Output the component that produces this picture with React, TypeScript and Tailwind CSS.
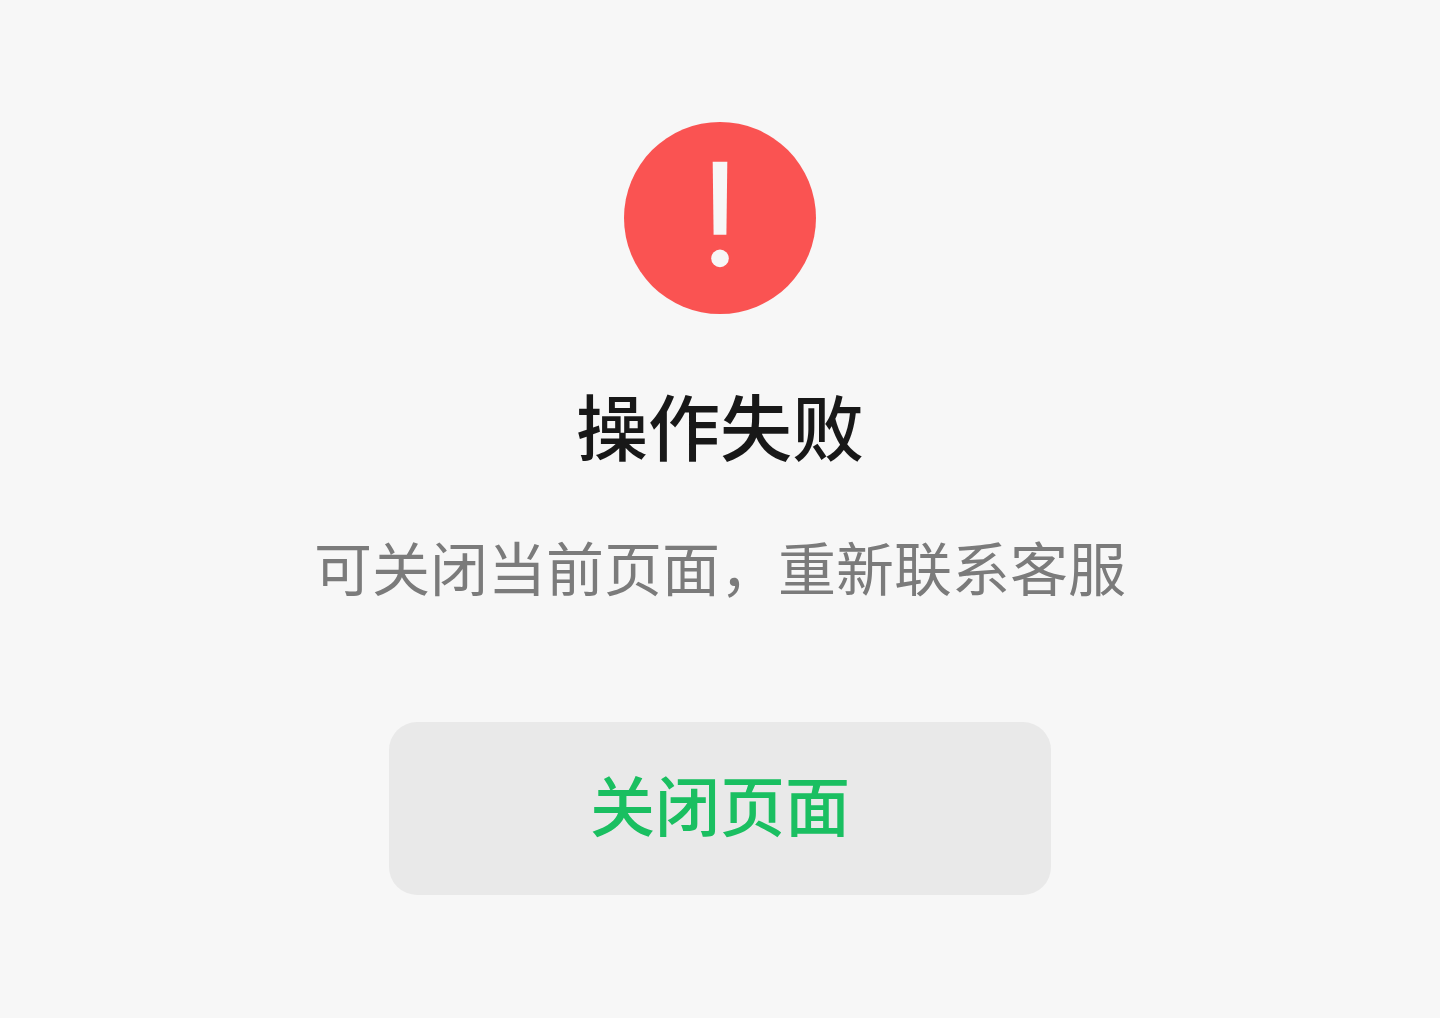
function ErrorIcon() {
  return (
    <svg viewBox="0 0 192 192" className="size-48" aria-hidden="true">
      <circle cx="96" cy="96" r="96" fill="#fa5352" />
      <path d="M88.700 39.700h14.600l-.9 73.100h-12.800z" fill="#f7f7f7" />
      <circle cx="96" cy="136.400" r="8.800" fill="#f7f7f7" />
    </svg>
  )
}

export default function App() {
  return (
    <main className="flex min-h-screen flex-col items-center bg-[#f7f7f7] px-6 pt-[122px] pb-[123px] font-['Noto_Sans_CJK_SC',sans-serif]">
      <ErrorIcon />
      <h1 className="mt-[60px] text-center text-[72px] leading-[100px] font-medium text-[#181818]">操作失败</h1>
      <p className="mt-[52px] text-center text-[58px] leading-[80px] text-[#7b7b7b]">可关闭当前页面，重新联系客服</p>
      <button
        type="button"
        className="mt-[116px] w-full max-w-[662px] rounded-[28px] bg-[#e9e9e9] pt-9 pb-[46px] text-[65px] leading-[91px] font-medium text-[#1abf61]"
      >
        关闭页面
      </button>
    </main>
  )
}
